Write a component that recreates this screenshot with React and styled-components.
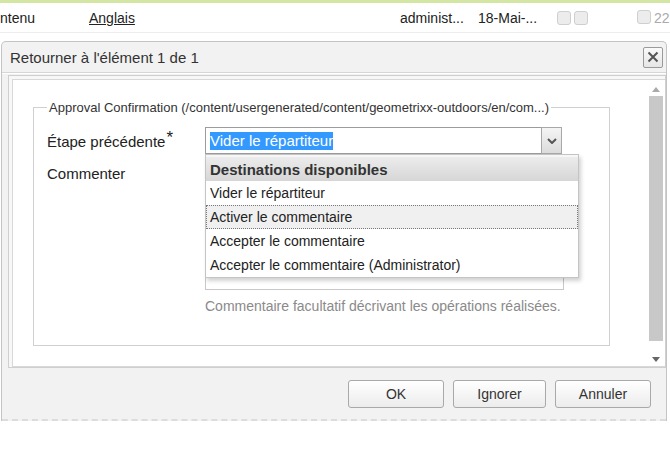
import styled, { createGlobalStyle } from "styled-components";

const GlobalStyle = createGlobalStyle`
  body {
    margin: 0;
    background: #ffffff;
    font-family: "Liberation Sans", Arial, sans-serif;
    color: #333;
  }
`;

const Page = styled.div`
  width: 670px;
  height: 452px;
  overflow: hidden;
  background: #fff;
`;

const GreenLine = styled.div`
  height: 3px;
  background: #d3e6a3;
`;

const GridRow = styled.div`
  height: 29px;
  display: flex;
  align-items: center;
  border-bottom: 1px solid #ececec;
  font-size: 14px;
  color: #222;
  white-space: nowrap;
`;

const Cell = styled.span`
  width: ${(p) => p.w}px;
  flex: none;
  text-decoration: ${(p) => (p.link ? "underline" : "none")};
  color: ${(p) => (p.muted ? "#aaa" : "#222")};
  display: flex;
  gap: 3px;
`;

const Check = styled.span`
  width: 12px;
  height: 12px;
  border: 1px solid #cfcfcf;
  border-radius: 3px;
  background: #ececec;
  display: inline-block;
`;

const Dialog = styled.div`
  margin: 8px 3px 0 1px;
  border: 1px solid #c4c4c4;
  border-bottom: none;
  border-radius: 5px 5px 0 0;
  background: #f2f2f2;
`;

const Header = styled.div`
  height: 30px;
  display: flex;
  align-items: center;
  justify-content: space-between;
  padding: 0 3px 0 8px;
  border-bottom: 1px solid #d6d6d6;
  box-shadow: 0 1px 0 #ffffff;
  font-size: 15px;
  color: #333;
`;

const CloseButton = styled.div`
  width: 18px;
  height: 19px;
  border: 1px solid #9a9a9a;
  border-radius: 2px;
  background: linear-gradient(#fafafa, #e6e6e6);
  display: flex;
  align-items: center;
  justify-content: center;
`;

const Body = styled.div`
  margin: 2px 0 0 6px;
  border: 1px solid #cfcfcf;
  padding: 3px 0 0 3px;
  background: #f7f7f7;
`;

const Inner = styled.div`
  height: 286px;
  border: 1px solid #d8d8d8;
  border-right: none;
  background: #fff;
  display: flex;
`;

const Content = styled.div`
  flex: 1;
  padding: 20px 37px 0 20px;
`;

const Scrollbar = styled.div`
  width: 18px;
  display: flex;
  flex-direction: column;
  align-items: center;
  padding: 7px 0 4px;
  gap: 4px;
`;

const Thumb = styled.div`
  width: 14px;
  flex: 1;
  background: #c8c8c8;
`;

const Arrow = styled.div`
  width: 0;
  height: 0;
  border-left: 4px solid transparent;
  border-right: 4px solid transparent;
  ${(p) =>
    p.down
      ? "border-top: 5px solid #666; margin-top: 12px;"
      : "border-bottom: 5px solid #aaa;"}
`;

const Fieldset = styled.fieldset`
  margin: 0;
  padding: 0 0 30px 13px;
  border: 1px solid #d0d0d0;
  height: 246px;
  box-sizing: border-box;
`;

const Legend = styled.legend`
  font-size: 13px;
  color: #333;
  padding: 0 2px;
  margin-left: 0;
`;

const FormGrid = styled.div`
  display: grid;
  grid-template-columns: 158px 1fr;
  row-gap: 4px;
  margin-top: 12px;
  font-size: 15px;
  color: #222;
`;

const Label = styled.div`
  height: 28px;
  display: flex;
  align-items: center;
`;

const Star = styled.span`
  font-size: 17px;
  position: relative;
  top: -3px;
  margin-left: 1px;
`;

const Combo = styled.div`
  position: relative;
  display: flex;
  width: 357px;
  height: 27px;
`;

const ComboInput = styled.div`
  flex: 1;
  border: 1px solid #9c9c9c;
  border-right: none;
  background: #fff;
  display: flex;
  align-items: center;
  padding-left: 4px;
`;

const Selected = styled.span`
  background: #3399ff;
  color: #fff;
  line-height: 18px;
`;

const Trigger = styled.div`
  width: 19px;
  border: 1px solid #a8a8a8;
  background: linear-gradient(#f4f4f4, #dcdcdc);
  display: flex;
  align-items: center;
  justify-content: center;
`;

const Menu = styled.div`
  position: absolute;
  top: 27px;
  left: 0;
  width: 372px;
  background: #fff;
  border: 1px solid #c4c4c4;
  box-shadow: 2px 3px 4px rgba(0, 0, 0, 0.18);
  z-index: 2;
  font-size: 14px;
  color: #222;
`;

const MenuHead = styled.div`
  height: 24px;
  display: flex;
  align-items: center;
  padding-left: 4px;
  font-weight: bold;
  font-size: 15px;
  color: #333;
  background: linear-gradient(#ececec, #d6d6d6);
  border-top: 2px solid #f6f6f6;
`;

const MenuItem = styled.div`
  height: 22px;
  display: flex;
  align-items: center;
  padding-left: 3px;
  border: 1px dotted ${(p) => (p.active ? "#777" : "transparent")};
  background: ${(p) => (p.active ? "#f0f0f0" : "#fff")};
`;

const FieldStack = styled.div`
  display: flex;
  flex-direction: column;
`;

const TextArea = styled.div`
  width: 357px;
  height: 129px;
  border: 1px solid #c8c8c8;
  background: #fff;
`;

const Help = styled.div`
  margin-top: 8px;
  font-size: 14px;
  color: #8a8a8a;
`;

const Footer = styled.div`
  height: 51px;
  display: flex;
  align-items: center;
  justify-content: flex-end;
  gap: 9px;
  padding-right: 15px;
  border-bottom: 2px dashed #dcdcdc;
`;

const Button = styled.button`
  width: ${(p) => p.w}px;
  height: 28px;
  border: 1px solid #a9a9a9;
  border-radius: 3px;
  background: linear-gradient(#ffffff, #ececec);
  font-family: "Liberation Sans", Arial, sans-serif;
  font-size: 14px;
  color: #333;
`;

const items = [
  "Vider le répartiteur",
  "Activer le commentaire",
  "Accepter le commentaire",
  "Accepter le commentaire (Administrator)",
];

export default function App() {
  return (
    <Page>
      <GlobalStyle />
      <GreenLine />
      <GridRow>
        <Cell w={89}>ntenu</Cell>
        <Cell w={311} link>
          Anglais
        </Cell>
        <Cell w={78}>administ...</Cell>
        <Cell w={79}>18-Mai-...</Cell>
        <Cell w={80}>
          <Check />
          <Check />
        </Cell>
        <Cell w={33} muted>
          <Check />
          <span>22</span>
        </Cell>
      </GridRow>
      <Dialog>
        <Header>
          <span>Retourner à l'élément 1 de 1</span>
          <CloseButton>
            <svg width="12" height="12" viewBox="0 0 12 12">
              <path d="M1.5 1.5 L10.5 10.5 M10.5 1.5 L1.5 10.5" stroke="#555" strokeWidth="2" />
            </svg>
          </CloseButton>
        </Header>
        <Body>
          <Inner>
            <Content>
              <Fieldset>
                <Legend>
                  Approval Confirmation (/content/usergenerated/content/geometrixx-outdoors/en/com...)
                </Legend>
                <FormGrid>
                  <Label>
                    Étape précédente<Star>*</Star>
                  </Label>
                  <Combo>
                    <ComboInput>
                      <Selected>Vider le répartiteur</Selected>
                    </ComboInput>
                    <Trigger>
                      <svg width="10" height="6" viewBox="0 0 10 6">
                        <path d="M1 1 L5 5 L9 1" stroke="#555" strokeWidth="2" fill="none" />
                      </svg>
                    </Trigger>
                    <Menu>
                      <MenuHead>Destinations disponibles</MenuHead>
                      {items.map((t, i) => (
                        <MenuItem key={t} active={i === 1}>
                          {t}
                        </MenuItem>
                      ))}
                    </Menu>
                  </Combo>
                  <Label>Commenter</Label>
                  <FieldStack>
                    <TextArea />
                    <Help>Commentaire facultatif décrivant les opérations réalisées.</Help>
                  </FieldStack>
                </FormGrid>
              </Fieldset>
            </Content>
            <Scrollbar>
              <Arrow />
              <Thumb />
              <Arrow down />
            </Scrollbar>
          </Inner>
        </Body>
        <Footer>
          <Button w={96}>OK</Button>
          <Button w={93}>Ignorer</Button>
          <Button w={96}>Annuler</Button>
        </Footer>
      </Dialog>
    </Page>
  );
}
